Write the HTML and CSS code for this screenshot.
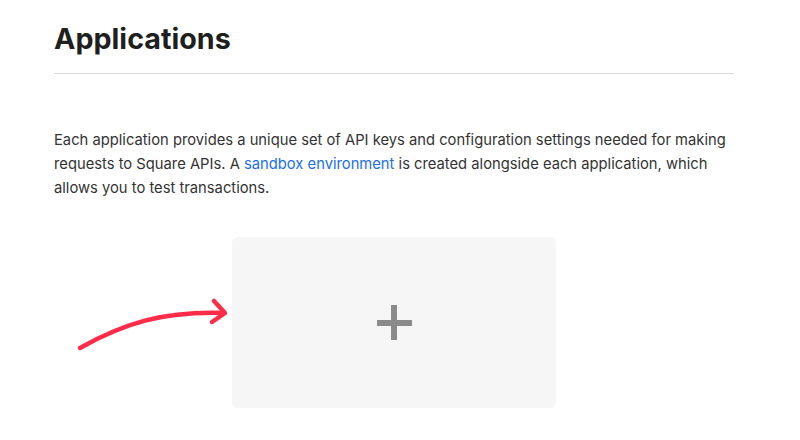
FILE: index.html
```html
<!DOCTYPE html>
<html lang="en">
<head>
    <meta charset="UTF-8">
    <title>Applications</title>
    <link rel="stylesheet" href="styles.css">
</head>
<body>
<main class="page">
    <header class="page__header">
        <h1>Applications</h1>
    </header>
    <p class="page__intro">
        Each application provides a unique set of API keys and configuration settings needed for making
        requests to Square APIs. A <a href="#">sandbox environment</a> is created alongside each application, which
        allows you to test transactions.
    </p>
    <section class="apps">
        <svg class="apps__arrow" width="160" height="70" viewBox="0 0 160 70">
            <path d="M6 61 C 50 36, 90 24, 150 26" fill="none" stroke="#fe2c48" stroke-width="4.5" stroke-linecap="round"/>
            <path d="M140 14 L 151 26 L 138 35" fill="none" stroke="#fe2c48" stroke-width="4.5" stroke-linecap="round" stroke-linejoin="round"/>
        </svg>
        <button class="apps__new" name="button">
            <span class="apps__plus"></span>
        </button>
    </section>
</main>
</body>
</html>
```

FILE: styles.css
```css
* {
    margin: 0;
    padding: 0;
    box-sizing: border-box;
}

body {
    background: #fff;
    color: #1f1f1f;
    font-family: Inter, "Noto Sans", sans-serif;
}

.page {
    width: 680px;
    margin-left: 54px;
}

.page__header {
    padding-top: 20px;
    padding-bottom: 15px;
    border-bottom: 1px solid #dcdcdc;
}

.page__header h1 {
    font-size: 28.7px;
    font-weight: 700;
    line-height: 38px;
}

.page__intro {
    margin-top: 54px;
    font-size: 14.75px;
    line-height: 24px;
    color: #333;
}

.page__intro a {
    color: #1a6ee8;
    text-decoration: none;
}

.apps {
    position: relative;
    display: flex;
    justify-content: center;
    margin-top: 37px;
}

.apps__arrow {
    position: absolute;
    left: 20px;
    top: 50px;
}

.apps__new {
    display: flex;
    align-items: center;
    justify-content: center;
    width: 324px;
    height: 171px;
    background: #f6f6f6;
    border: none;
    border-radius: 6px;
    cursor: pointer;
}

.apps__plus {
    position: relative;
    width: 35px;
    height: 35px;
}

.apps__plus:before,
.apps__plus:after {
    content: '';
    position: absolute;
    background: #8a8a8a;
}

.apps__plus:before {
    left: 0;
    top: 15px;
    width: 35px;
    height: 6px;
}

.apps__plus:after {
    left: 14.5px;
    top: 0;
    width: 6px;
    height: 35px;
}
```
